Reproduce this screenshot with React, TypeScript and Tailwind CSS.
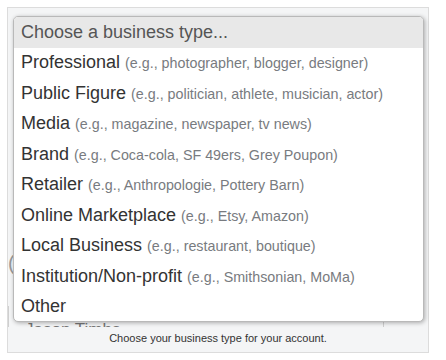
import React from "react";

const items: [string, string][] = [
  ["Professional", "(e.g., photographer, blogger, designer)"],
  ["Public Figure", "(e.g., politician, athlete, musician, actor)"],
  ["Media", "(e.g., magazine, newspaper, tv news)"],
  ["Brand", "(e.g., Coca-cola, SF 49ers, Grey Poupon)"],
  ["Retailer", "(e.g., Anthropologie, Pottery Barn)"],
  ["Online Marketplace", "(e.g., Etsy, Amazon)"],
  ["Local Business", "(e.g., restaurant, boutique)"],
  ["Institution/Non-profit", "(e.g., Smithsonian, MoMa)"],
  ["Other", ""],
];

export default function App() {
  return (
    <div
      className="w-[446px] h-[360px] bg-white pt-[7px] pl-[7px]"
      style={{ fontFamily: '"Liberation Sans", Arial, sans-serif' }}
    >
      <div className="relative w-[422px] h-[346px] border border-[#dcdcdc] bg-[#f4f5f6] flex flex-col">
        {/* background form */}
        <div className="flex-1 flex flex-col">
          <div className="flex-1" />
          <div className="h-[21px] flex items-start border-l border-[#cfcfcf] mr-[44px] overflow-hidden relative">
            <span className="pl-[16px] pt-[14px] text-[17px] leading-[20px] text-[#777]">Jason Timbs</span>
            <div className="absolute right-[0px] top-[12px] h-[9px] border-l border-[#cfcfcf]" />
          </div>
        </div>
        <div className="h-[25px] flex items-center justify-center text-[11px] text-[#333] pb-[2px]">
          Choose your business type for your account.
        </div>
        <span className="absolute left-[0px] top-[245px] text-[20px] text-[#999] leading-none">(</span>

        {/* dropdown overlay */}
        <div className="absolute left-[5px] top-[8px] w-[411px] h-[306px] bg-white border border-[#b9b9b9] rounded-[5px] shadow-[1px_1px_4px_rgba(0,0,0,0.3)] overflow-hidden">
          <div className="h-[30.5px] bg-[#e8e8e8] flex items-center pl-[7px] text-[18px] text-[#555]">
            Choose a business type...
          </div>
          {items.map(([a, b]) => (
            <div key={a} className="h-[30.5px] flex items-center pl-[7px] whitespace-nowrap">
              <span className="text-[18px] text-[#333]">{a}</span>
              {b && <span className="text-[14.3px] text-[#787b80] ml-[5px] pt-[2px]">{b}</span>}
            </div>
          ))}
        </div>
      </div>
    </div>
  );
}
